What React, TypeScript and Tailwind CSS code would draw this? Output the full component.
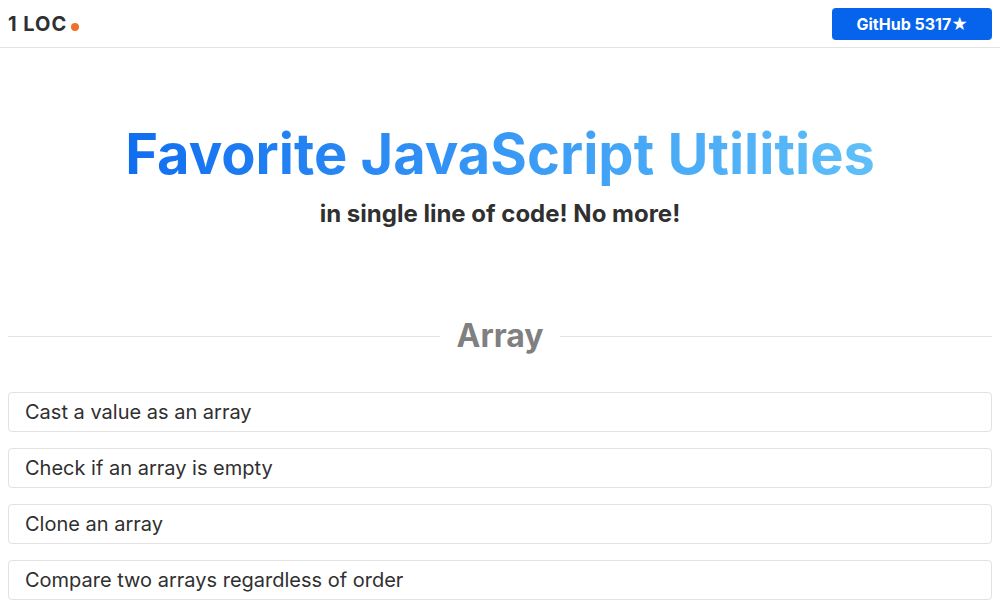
const utilities = [
  "Cast a value as an array",
  "Check if an array is empty",
  "Clone an array",
  "Compare two arrays regardless of order",
];

export default function App() {
  return (
    <div className="bg-white font-['Inter',sans-serif] text-[#303030]">
      <header className="flex h-12 items-center justify-between border-b border-[#e2e2e2] px-2">
        <a href="#top" className="flex items-baseline gap-1 text-xl font-bold tracking-wider">
          1 LOC
          <span className="size-2 rounded-full bg-[#f0702a]" />
        </a>
        <a href="#github" className="flex h-8 items-center rounded-sm bg-[#0563ec] px-6 font-bold text-white">
          GitHub 5317★
        </a>
      </header>
      <main id="top" className="px-2">
        <div className="flex flex-col items-center pt-18 text-center">
          <h1 className="bg-linear-to-r from-[#116df0] to-[#5fc0f8] bg-clip-text text-[56px] leading-[68px] font-bold text-transparent">
            Favorite JavaScript Utilities
          </h1>
          <h2 className="pt-2 text-2xl leading-9 font-bold">in single line of code! No more!</h2>
        </div>
        <section className="pt-20">
          <div className="flex items-center gap-4">
            <hr className="flex-1 border-[#e2e2e2]" />
            <h2 className="text-[32px] leading-12 font-bold text-[#808080]">Array</h2>
            <hr className="flex-1 border-[#e2e2e2]" />
          </div>
          <ul className="flex flex-col gap-4 pt-8">
            {utilities.map((title) => (
              <li key={title}>
                <a href="#snippet" className="flex h-10 items-center rounded-sm border border-[#e2e2e2] px-4 text-xl">
                  {title}
                </a>
              </li>
            ))}
          </ul>
        </section>
      </main>
    </div>
  );
}
